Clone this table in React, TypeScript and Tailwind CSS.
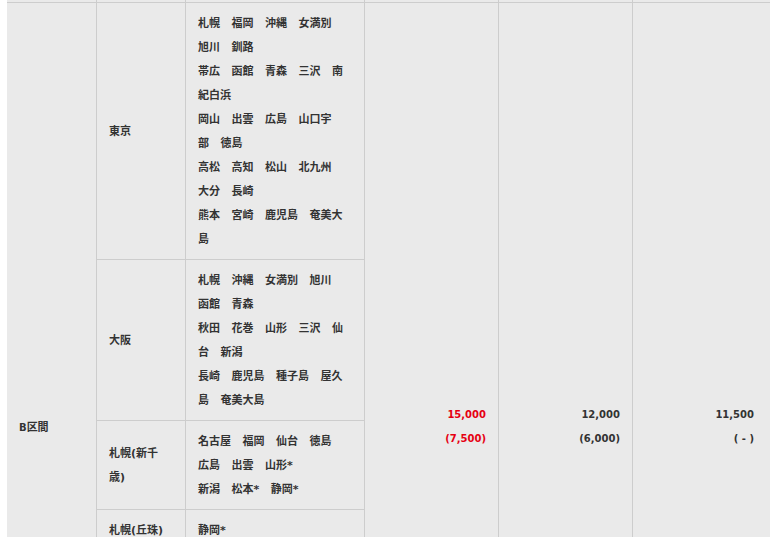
const border = "border-[#cdcdcd]";

type Route = {
  from: string[];
  lines: string[][];
};

const routes: Route[] = [
  {
    from: ["東京"],
    lines: [
      ["札幌", "福岡", "沖縄", "女満別"],
      ["旭川", "釧路"],
      ["帯広", "函館", "青森", "三沢", "南"],
      ["紀白浜"],
      ["岡山", "出雲", "広島", "山口宇"],
      ["部", "徳島"],
      ["高松", "高知", "松山", "北九州"],
      ["大分", "長崎"],
      ["熊本", "宮崎", "鹿児島", "奄美大"],
      ["島"],
    ],
  },
  {
    from: ["大阪"],
    lines: [
      ["札幌", "沖縄", "女満別", "旭川"],
      ["函館", "青森"],
      ["秋田", "花巻", "山形", "三沢", "仙"],
      ["台", "新潟"],
      ["長崎", "鹿児島", "種子島", "屋久"],
      ["島", "奄美大島"],
    ],
  },
  {
    from: ["札幌(新千", "歳)"],
    lines: [
      ["名古屋", "福岡", "仙台", "徳島"],
      ["広島", "出雲", "山形*"],
      ["新潟", "松本*", "静岡*"],
    ],
  },
  {
    from: ["札幌(丘珠)"],
    lines: [["静岡*"]],
  },
];

const fares = [
  { main: "15,000", sub: "(7,500)", red: true },
  { main: "12,000", sub: "(6,000)", red: false },
  { main: "11,500", sub: "( - )", red: false },
];

function RouteRow({ route }: { route: Route }) {
  return (
    <div className={`flex border-b ${border}`}>
      <div className="flex w-[88px] shrink-0 flex-col justify-center pt-[9px] pb-[7px] pl-3">
        {route.from.map((line) => (
          <div key={line} className="h-6 leading-6">
            {line}
          </div>
        ))}
      </div>
      <div className={`w-[179px] shrink-0 border-l pt-[9px] pb-[7px] pl-3 ${border}`}>
        {route.lines.map((items, i) => (
          <div key={i} className="flex h-6 gap-[11.5px] leading-6 whitespace-nowrap">
            {items.map((item) => (
              <span key={item}>{item}</span>
            ))}
          </div>
        ))}
      </div>
    </div>
  );
}

export default function App() {
  return (
    <div className="h-[537px] w-full overflow-hidden bg-white pl-[7px] font-['DejaVu_Sans','Noto_Sans_CJK_JP',sans-serif] text-[11px] font-bold text-[#333]">
      <div className="bg-[#eaeaea]">
        <div className={`flex h-[3px] border-b ${border}`}>
          <div className="w-[89px] shrink-0" />
          <div className={`w-[89px] shrink-0 border-l ${border}`} />
          <div className={`w-[179px] shrink-0 border-l ${border}`} />
          <div className={`w-[134px] shrink-0 border-l ${border}`} />
          <div className={`w-[134px] shrink-0 border-l ${border}`} />
          <div className={`w-[134px] shrink-0 border-l ${border}`} />
        </div>

        <div className="flex h-[848px]">
          <div className="flex w-[89px] shrink-0 items-center px-3 pt-[3px]">
            <span>
              <span className="text-[10px]">B</span>区間
            </span>
          </div>

          <div className={`flex w-[268px] shrink-0 flex-col border-l ${border}`}>
            {routes.map((route) => (
              <RouteRow key={route.from.join("")} route={route} />
            ))}
            <div className="flex flex-1">
              <div className="w-[88px] shrink-0" />
              <div className={`flex-1 border-l ${border}`} />
            </div>
          </div>

          {fares.map((fare) => (
            <div
              key={fare.main}
              className={`flex w-[134px] shrink-0 flex-col items-end justify-center border-l pr-3 text-[10px] leading-6 ${border} ${
                fare.red ? "text-[#e60012]" : ""
              }`}
            >
              <div>{fare.main}</div>
              <div>{fare.sub}</div>
            </div>
          ))}
        </div>
      </div>
    </div>
  );
}
